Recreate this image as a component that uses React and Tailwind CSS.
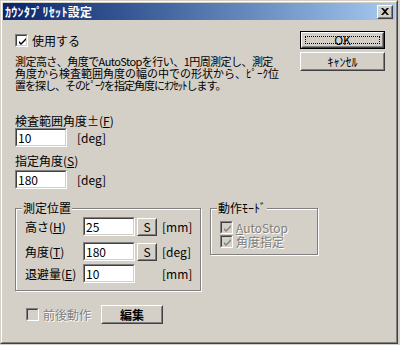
import React from "react";

const F = "font-['Noto_Sans_CJK_JP','Noto_Sans_CJK_SC',sans-serif]";

function Raised({ children, className = "", inner = "" }) {
  return (
    <div className={`border border-t-white border-l-white border-r-[#404040] border-b-[#404040] bg-[#d4d0c8] ${className}`}>
      <div className={`w-full h-full border border-t-[#d4d0c8] border-l-[#d4d0c8] border-r-[#808080] border-b-[#808080] flex items-center justify-center ${inner}`}>
        {children}
      </div>
    </div>
  );
}

function Sunken({ children, className = "", bg = "bg-white" }) {
  return (
    <div className={`border border-t-[#808080] border-l-[#808080] border-r-white border-b-white ${className}`}>
      <div className={`w-full h-full border border-t-[#404040] border-l-[#404040] border-r-[#d4d0c8] border-b-[#d4d0c8] ${bg}`}>
        {children}
      </div>
    </div>
  );
}

function Check({ checked, disabled }) {
  return (
    <Sunken className="w-[13px] h-[13px] shrink-0" bg={disabled ? "bg-[#d4d0c8]" : "bg-white"}>
      {checked && (
        <svg width="11" height="11" viewBox="0 0 11 11" className="block">
          <path d="M2 5 L2 7 L4 9 L9 4 L9 2 L4 7 Z" fill={disabled ? "#808080" : "#000"} />
        </svg>
      )}
    </Sunken>
  );
}

function Input({ value }) {
  return (
    <Sunken className="w-[52px] h-[19px]">
      <div className="pl-[1px] text-[12px] leading-[15px] text-black">{value}</div>
    </Sunken>
  );
}

const U = ({ c }) => <span className="underline underline-offset-[1px]">{c}</span>;

export default function App() {
  return (
    <div className={`w-[400px] h-[345px] bg-[#d4d0c8] ${F} text-[12px] text-black`}>
      <div className="w-[398px] h-[344px] border border-t-[#d4d0c8] border-l-[#d4d0c8] border-r-[#404040] border-b-[#404040]">
        <div className="w-full h-full border border-t-white border-l-white border-r-[#808080] border-b-[#808080] p-[1px] flex flex-col">
          {/* title bar */}
          <div className="h-[17px] bg-gradient-to-r from-[#0a246a] to-[#a6caf0] flex items-center justify-between pl-[2px] pr-[2px]">
            <span className="text-white font-bold text-[12px] leading-[14px] tracking-[0.3px]">ｶｳﾝﾀﾌﾟﾘｾｯﾄ設定</span>
            <Raised className="w-[16px] h-[14px]">
              <svg width="8" height="7" viewBox="0 0 8 7" className="block">
                <path d="M0 0 H2 L4 2 L6 0 H8 L5 3.5 L8 7 H6 L4 5 L2 7 H0 L3 3.5 Z" fill="#000" />
              </svg>
            </Raised>
          </div>

          {/* content */}
          <div className="flex-1 pl-[12px] pr-[10px] flex flex-col">
            <div className="flex">
              <div className="flex-1 flex flex-col">
                <div className="mt-[14px] h-[13px] flex items-center gap-[4px]">
                  <Check checked />
                  <span className="leading-[13px]">使用する</span>
                </div>
                <div className="mt-[8px] text-[11px] leading-[12px] whitespace-nowrap">
                  <div className="h-[12px] tracking-[-0.55px]">測定高さ、角度でAutoStopを行い、1円周測定し、測定</div>
                  <div className="h-[12px]">角度から検査範囲角度の幅の中での形状から、ﾋﾟｰｸ位</div>
                  <div className="h-[12px] tracking-[-1px]">置を探し、そのﾋﾟｰｸを指定角度にｵﾌｾｯﾄします。</div>
                </div>
              </div>
              <div className="w-[85px] flex flex-col mt-[11px]">
                <div className="h-[18px] border border-black">
                  <Raised className="w-full h-full" inner="p-[2px]">
                    <div className="w-full h-full border border-dotted border-black flex items-center justify-center leading-[12px]">
                      OK
                    </div>
                  </Raised>
                </div>
                <Raised className="w-full h-[19px] mt-[3px]">
                  <span className="leading-[12px]">ｷｬﾝｾﾙ</span>
                </Raised>
              </div>
            </div>

            <div className="mt-[24px] leading-[12px]">
              検査範囲角度±(<U c="F" />)
            </div>
            <div className="mt-[1px] flex items-center">
              <Input value="10" />
              <span className="ml-[10px]">[deg]</span>
            </div>

            <div className="mt-[8px] leading-[12px]">
              指定角度(<U c="S" />)
            </div>
            <div className="mt-[3px] flex items-center">
              <Input value="180" />
              <span className="ml-[10px]">[deg]</span>
            </div>

            <div className="mt-[19px] flex items-start">
              <div className="relative w-[186px] border border-[#808080] shadow-[inset_1px_1px_0_#fff,1px_1px_0_#fff] pl-[9px] pt-[8px] pb-[7px] flex flex-col">
                <span className="absolute -top-[7px] left-[6px] px-[1px] bg-[#d4d0c8] leading-[12px]">測定位置</span>
                <div className="flex items-center h-[19px]">
                  <span className="w-[58px]">高さ(<U c="H" />)</span>
                  <Input value="25" />
                  <Raised className="ml-[2px] w-[20px] h-[18px]"><span className="leading-[12px]">S</span></Raised>
                  <span className="ml-[5px]">[mm]</span>
                </div>
                <div className="flex items-center h-[19px] mt-[6px]">
                  <span className="w-[58px]">角度(<U c="T" />)</span>
                  <Input value="180" />
                  <Raised className="ml-[2px] w-[20px] h-[18px]"><span className="leading-[12px]">S</span></Raised>
                  <span className="ml-[5px]">[deg]</span>
                </div>
                <div className="flex items-center h-[19px] mt-[3px]">
                  <span className="w-[58px]">退避量(<U c="E" />)</span>
                  <Input value="10" />
                  <span className="ml-[27px]">[mm]</span>
                </div>
              </div>

              <div className="relative ml-[9px] w-[108px] border border-[#808080] shadow-[inset_1px_1px_0_#fff,1px_1px_0_#fff] pl-[9px] pt-[12px] pb-[6px] flex flex-col">
                <span className="absolute -top-[7px] left-[6px] px-[1px] bg-[#d4d0c8] leading-[12px]">動作ﾓｰﾄﾞ</span>
                <div className="h-[13px] flex items-center gap-[3px]">
                  <Check checked disabled />
                  <span className="text-[#808080] [text-shadow:1px_1px_0_#fff] leading-[12px]">
                    <U c="A" />utoStop
                  </span>
                </div>
                <div className="h-[13px] mt-[1px] flex items-center gap-[3px]">
                  <Check checked disabled />
                  <span className="text-[#808080] [text-shadow:1px_1px_0_#fff] leading-[12px]">角度指定</span>
                </div>
              </div>
            </div>

            <div className="mt-[14px] flex items-center pl-[11px]">
              <Check disabled />
              <span className="ml-[4px] text-[#808080] [text-shadow:1px_1px_0_#fff] leading-[13px]">前後動作</span>
              <Raised className="ml-[10px] w-[62px] h-[19px]">
                <span className="font-bold leading-[12px]">編集</span>
              </Raised>
            </div>
          </div>
        </div>
      </div>
    </div>
  );
}
